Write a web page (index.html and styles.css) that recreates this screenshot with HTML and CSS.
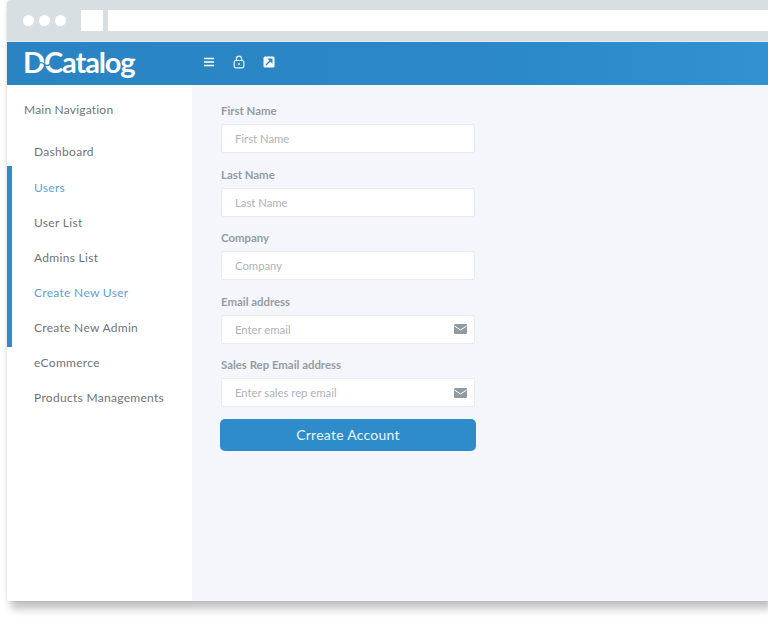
FILE: index.html
```html
<!DOCTYPE html>
<html lang="en">
<head>
    <meta charset="UTF-8">
    <meta name="viewport" content="width=device-width, initial-scale=1.0">
    <title>DCatalog - Create New User</title>
    <link rel="stylesheet" href="styles.css">
</head>
<body>
    <div class="window">
        <div class="browser-bar">
            <span class="dot"></span>
            <span class="dot"></span>
            <span class="dot"></span>
            <span class="tab"></span>
            <span class="address"></span>
        </div>

        <header class="topbar">
            <div class="logo">
                DCatalog
                <svg class="logo-wave" viewBox="0 0 14 6" width="14" height="6">
                    <path d="M0 4 C3 1 6 1 8 3 C10 5 12 5 14 3" fill="none" stroke="#2b87c6" stroke-width="1.3"/>
                </svg>
            </div>
            <div class="topbar-icons">
                <svg viewBox="0 0 12 10" width="12" height="10">
                    <path d="M1 1.5H11M1 5H11M1 8.5H11" stroke="#fff" stroke-width="1.7" fill="none"/>
                </svg>
                <svg viewBox="0 0 12 14" width="12" height="14">
                    <rect x="1.2" y="5.5" width="9.6" height="7.3" rx="1.5" fill="none" stroke="#e6f3fb" stroke-width="1.2"/>
                    <path d="M3.4 5.5V3.8a2.6 2.6 0 0 1 5.2 0V5.5" fill="none" stroke="#e6f3fb" stroke-width="1.2"/>
                    <circle cx="6" cy="9" r="1" fill="#e6f3fb"/>
                </svg>
                <svg viewBox="0 0 12 12" width="12" height="12">
                    <rect x="0.5" y="0.5" width="11" height="11" rx="1.5" fill="#fff"/>
                    <path d="M3 9L7 5M6 3.2H8.8V6Z" stroke="#2b87c6" stroke-width="1.4" fill="#2b87c6"/>
                </svg>
            </div>
        </header>

        <div class="main">
            <nav class="sidebar">
                <div class="nav-title">Main Navigation</div>
                <a class="nav-item">Dashboard</a>
                <div class="nav-group">
                    <a class="nav-item active">Users</a>
                    <a class="nav-item">User List</a>
                    <a class="nav-item">Admins List</a>
                    <a class="nav-item active">Create New User</a>
                    <a class="nav-item">Create New Admin</a>
                </div>
                <a class="nav-item">eCommerce</a>
                <a class="nav-item">Products Managements</a>
            </nav>

            <main class="content">
                <form class="user-form">
                    <div class="field">
                        <label>First Name</label>
                        <div class="input-box"><input type="text" placeholder="First Name"></div>
                    </div>
                    <div class="field">
                        <label>Last Name</label>
                        <div class="input-box"><input type="text" placeholder="Last Name"></div>
                    </div>
                    <div class="field">
                        <label>Company</label>
                        <div class="input-box"><input type="text" placeholder="Company"></div>
                    </div>
                    <div class="field">
                        <label>Email address</label>
                        <div class="input-box">
                            <input type="text" placeholder="Enter email">
                            <svg class="mail" viewBox="0 0 13 10" width="13" height="10">
                                <rect width="13" height="10" rx="1.2" fill="#8f9ba3"/>
                                <path d="M0.5 2L6.5 6L12.5 2" fill="none" stroke="#fff" stroke-width="1"/>
                            </svg>
                        </div>
                    </div>
                    <div class="field">
                        <label>Sales Rep Email address</label>
                        <div class="input-box">
                            <input type="text" placeholder="Enter sales rep email">
                            <svg class="mail" viewBox="0 0 13 10" width="13" height="10">
                                <rect width="13" height="10" rx="1.2" fill="#8f9ba3"/>
                                <path d="M0.5 2L6.5 6L12.5 2" fill="none" stroke="#fff" stroke-width="1"/>
                            </svg>
                        </div>
                    </div>
                    <button type="button" class="submit">Crreate Account</button>
                </form>
            </main>
        </div>
    </div>
</body>
</html>
```

FILE: styles.css
```css
html, body {
    height: 100%;
}
body {
    margin: 0;
    background: #fff;
    font-family: 'Lato', sans-serif;
    overflow: hidden;
}
.window {
    width: 761px;
    height: 601px;
    margin-left: 7px;
    display: flex;
    flex-direction: column;
    border-top-left-radius: 4px;
    box-shadow: 0 0 3px rgba(0, 0, 0, 0.14), 4px 8px 8px rgba(0, 0, 0, 0.24);
}
.browser-bar {
    height: 42px;
    flex-shrink: 0;
    box-sizing: border-box;
    background: #d8dfe2;
    display: flex;
    align-items: center;
    padding: 0 0 0 16px;
    border-bottom: 1px solid #e6eaec;
    border-top-left-radius: 4px;
}
.dot {
    width: 11px;
    height: 11px;
    border-radius: 50%;
    background: #fff;
    margin-right: 5px;
}
.tab {
    width: 22px;
    height: 21px;
    background: #fff;
    margin-left: 10px;
    margin-right: 5px;
    border-radius: 1px;
}
.address {
    flex: 1;
    height: 21px;
    background: #fff;
    border-radius: 1px;
}
.topbar {
    height: 43px;
    flex-shrink: 0;
    background: linear-gradient(90deg, #2a84c3, #2b87c6 60%, #3291d0);
    display: flex;
    align-items: center;
}
.logo {
    width: 178px;
    padding: 0 0 4px 16px;
    box-sizing: border-box;
    color: #fff;
    font-size: 29px;
    font-weight: 700;
    line-height: 39px;
    white-space: nowrap;
    position: relative;
    letter-spacing: -1.1px;
}
.logo-wave {
    position: absolute;
    left: 29px;
    top: 19px;
}
.topbar-icons {
    display: flex;
    align-items: center;
    gap: 18px;
    margin: 0 0 4px 18px;
}
.main {
    flex: 1;
    display: flex;
    min-height: 0;
}
.sidebar {
    width: 185px;
    flex-shrink: 0;
    background: #fff;
    padding-top: 16px;
    box-sizing: border-box;
}
.nav-title {
    padding-left: 17px;
    font-size: 12px;
    line-height: 18px;
    letter-spacing: 0.2px;
    color: #6f7478;
    margin-bottom: 15px;
}
.nav-item {
    display: block;
    height: 35px;
    line-height: 35px;
    padding-left: 27px;
    font-size: 12px;
    letter-spacing: 0.3px;
    color: #6f7478;
}
.nav-item.active {
    color: #5b9fd8;
}
.nav-group {
    border-left: 5px solid #2e8ccb;
    padding: 4px 0 2px;
    margin-top: -3px;
    margin-bottom: -2px;
}
.nav-group .nav-item {
    padding-left: 22px;
}
.content {
    flex: 1;
    background: #f4f6fb;
    padding: 17px 0 0 28px;
}
.user-form {
    width: 256px;
}
.field {
    padding-left: 1px;
    margin-bottom: 12.5px;
}
.field label {
    display: block;
    font-size: 11.4px;
    font-weight: 700;
    line-height: 17px;
    color: #959da3;
    margin-bottom: 5px;
}
.input-box {
    height: 29px;
    width: 254px;
    box-sizing: border-box;
    background: #fff;
    border: 1px solid #e8ebf0;
    border-radius: 2px;
    display: flex;
    align-items: center;
    padding-right: 7px;
}
.input-box input {
    flex: 1;
    min-width: 0;
    border: none;
    outline: none;
    background: transparent;
    padding: 0 0 0 13px;
    font-family: 'Lato', sans-serif;
    font-size: 11.3px;
    color: #adb3b9;
}
.input-box input::placeholder {
    color: #adb3b9;
    opacity: 1;
}
.submit {
    display: block;
    width: 256px;
    height: 32px;
    margin-top: -1px;
    border: none;
    border-radius: 5px;
    background: #2e8ccb;
    color: #eaf4fb;
    font-family: 'Lato', sans-serif;
    font-size: 14px;
    letter-spacing: 0.25px;
    cursor: pointer;
}
```
